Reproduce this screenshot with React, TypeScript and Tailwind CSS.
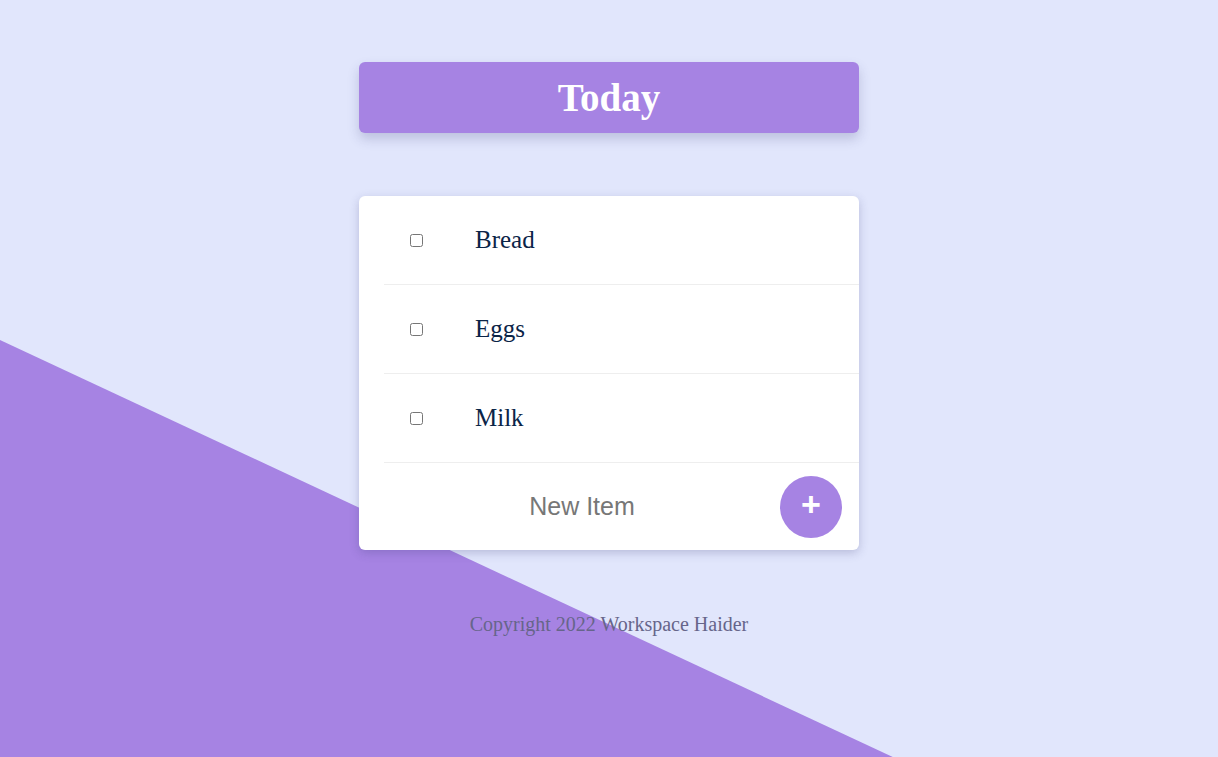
import { useState } from "react";

type Item = { id: number; text: string; done: boolean };

const initialItems: Item[] = [
  { id: 1, text: "Bread", done: false },
  { id: 2, text: "Eggs", done: false },
  { id: 3, text: "Milk", done: false },
];

function App() {
  const [items, setItems] = useState<Item[]>(initialItems);
  const [draft, setDraft] = useState("");

  const toggle = (id: number) =>
    setItems((prev) => prev.map((it) => (it.id === id ? { ...it, done: !it.done } : it)));

  const addItem = () => {
    if (!draft.trim()) return;
    setItems((prev) => [...prev, { id: Date.now(), text: draft.trim(), done: false }]);
    setDraft("");
  };

  return (
    <div className="relative min-h-screen overflow-hidden bg-[#e1e6fc] font-['Liberation_Serif',serif]">
      {/* diagonal backdrop */}
      <div className="pointer-events-none absolute inset-0 bg-[#a683e3] [clip-path:polygon(0_44.9%,73.3%_100%,0_100%)]" />

      <div className="relative flex flex-col items-center pt-[62px]">
        <div className="flex h-[71px] w-[500px] items-center justify-center rounded-md bg-[#a683e3] shadow-[0_6px_12px_rgba(60,60,120,0.22)]">
          <h1 className="text-[39px] font-bold leading-none text-white">Today</h1>
        </div>

        <div className="mt-[63px] w-[500px] rounded-md bg-white shadow-[0_3px_10px_rgba(60,60,120,0.25)]">
          <ul className="ml-[25px]">
            {items.map((item) => (
              <li
                key={item.id}
                className="flex h-[89px] items-center border-b border-[#eeeeee]"
              >
                <input
                  type="checkbox"
                  checked={item.done}
                  onChange={() => toggle(item.id)}
                  className="ml-[26px] h-[13px] w-[13px]"
                />
                <span
                  className={`ml-[52px] text-[25px] text-[#0b2447] ${item.done ? "line-through" : ""}`}
                >
                  {item.text}
                </span>
              </li>
            ))}
          </ul>
          <div className="ml-[25px] flex h-[87px] items-center pr-[17px]">
            <input
              value={draft}
              onChange={(e) => setDraft(e.target.value)}
              placeholder="New Item"
              className="min-w-0 flex-1 bg-transparent text-center font-['Liberation_Sans',sans-serif] text-[25px] text-[#333] outline-none placeholder:text-[#777]"
            />
            <button
              type="button"
              onClick={addItem}
              className="flex h-[62px] w-[62px] shrink-0 items-center justify-center rounded-full bg-[#a683e3] pb-[6px] font-['Liberation_Sans',sans-serif] text-[34px] font-bold leading-none text-white"
            >
              +
            </button>
          </div>
        </div>

        <p className="mt-[59px] text-[20px] text-[#66658a]">Copyright 2022 Workspace Haider</p>
      </div>
    </div>
  );
}

export default App;
